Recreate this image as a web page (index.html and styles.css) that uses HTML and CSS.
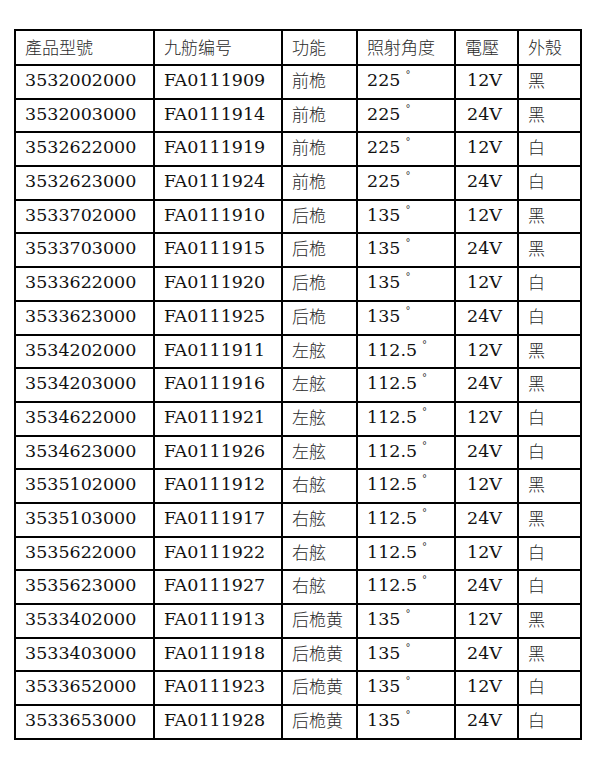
FILE: index.html
```html
<!DOCTYPE html>
<html lang="zh-Hant">
<head>
<meta charset="utf-8">
<title>產品型號</title>
<link rel="stylesheet" href="styles.css">
</head>
<body>
<table class="spec">
<colgroup>
<col class="c1"><col class="c2"><col class="c3"><col class="c4"><col class="c5"><col class="c6">
</colgroup>
<thead>
<tr><th class="zh">產品型號</th><th class="zh">九舫编号</th><th class="zh">功能</th><th class="zh">照射角度</th><th class="zh">電壓</th><th class="zh">外殼</th></tr>
</thead>
<tbody>
<tr><td>3532002000</td><td>FA0111909</td><td class="zh">前桅</td><td>225<span class="deg">°</span></td><td class="v">12V</td><td class="zh">黑</td></tr>
<tr><td>3532003000</td><td>FA0111914</td><td class="zh">前桅</td><td>225<span class="deg">°</span></td><td class="v">24V</td><td class="zh">黑</td></tr>
<tr><td>3532622000</td><td>FA0111919</td><td class="zh">前桅</td><td>225<span class="deg">°</span></td><td class="v">12V</td><td class="zh">白</td></tr>
<tr><td>3532623000</td><td>FA0111924</td><td class="zh">前桅</td><td>225<span class="deg">°</span></td><td class="v">24V</td><td class="zh">白</td></tr>
<tr><td>3533702000</td><td>FA0111910</td><td class="zh">后桅</td><td>135<span class="deg">°</span></td><td class="v">12V</td><td class="zh">黑</td></tr>
<tr><td>3533703000</td><td>FA0111915</td><td class="zh">后桅</td><td>135<span class="deg">°</span></td><td class="v">24V</td><td class="zh">黑</td></tr>
<tr><td>3533622000</td><td>FA0111920</td><td class="zh">后桅</td><td>135<span class="deg">°</span></td><td class="v">12V</td><td class="zh">白</td></tr>
<tr><td>3533623000</td><td>FA0111925</td><td class="zh">后桅</td><td>135<span class="deg">°</span></td><td class="v">24V</td><td class="zh">白</td></tr>
<tr><td>3534202000</td><td>FA0111911</td><td class="zh">左舷</td><td>112.5<span class="deg">°</span></td><td class="v">12V</td><td class="zh">黑</td></tr>
<tr><td>3534203000</td><td>FA0111916</td><td class="zh">左舷</td><td>112.5<span class="deg">°</span></td><td class="v">24V</td><td class="zh">黑</td></tr>
<tr><td>3534622000</td><td>FA0111921</td><td class="zh">左舷</td><td>112.5<span class="deg">°</span></td><td class="v">12V</td><td class="zh">白</td></tr>
<tr><td>3534623000</td><td>FA0111926</td><td class="zh">左舷</td><td>112.5<span class="deg">°</span></td><td class="v">24V</td><td class="zh">白</td></tr>
<tr><td>3535102000</td><td>FA0111912</td><td class="zh">右舷</td><td>112.5<span class="deg">°</span></td><td class="v">12V</td><td class="zh">黑</td></tr>
<tr><td>3535103000</td><td>FA0111917</td><td class="zh">右舷</td><td>112.5<span class="deg">°</span></td><td class="v">24V</td><td class="zh">黑</td></tr>
<tr><td>3535622000</td><td>FA0111922</td><td class="zh">右舷</td><td>112.5<span class="deg">°</span></td><td class="v">12V</td><td class="zh">白</td></tr>
<tr><td>3535623000</td><td>FA0111927</td><td class="zh">右舷</td><td>112.5<span class="deg">°</span></td><td class="v">24V</td><td class="zh">白</td></tr>
<tr><td>3533402000</td><td>FA0111913</td><td class="zh">后桅黄</td><td>135<span class="deg">°</span></td><td class="v">12V</td><td class="zh">黑</td></tr>
<tr><td>3533403000</td><td>FA0111918</td><td class="zh">后桅黄</td><td>135<span class="deg">°</span></td><td class="v">24V</td><td class="zh">黑</td></tr>
<tr><td>3533652000</td><td>FA0111923</td><td class="zh">后桅黄</td><td>135<span class="deg">°</span></td><td class="v">12V</td><td class="zh">白</td></tr>
<tr><td>3533653000</td><td>FA0111928</td><td class="zh">后桅黄</td><td>135<span class="deg">°</span></td><td class="v">24V</td><td class="zh">白</td></tr>
</tbody>
</table>
</body>
</html>
```
FILE: styles.css
```css
html, body {
  margin: 0;
  padding: 0;
  background: #ffffff;
}
body {
  padding: 28.5px 0 0 14px;
}
.spec {
  border-collapse: separate;
  border-spacing: 0;
  table-layout: fixed;
  width: 568px;
  border-left: 2px solid #000;
  border-top: 2px solid #000;
  font-family: "DejaVu Serif", "Noto Sans CJK TC", serif;
  font-size: 17.5px;
  color: #111;
}
.c1 { width: 139px; }
.c2 { width: 128px; }
.c3 { width: 75px; }
.c4 { width: 98px; }
.c5 { width: 63px; }
.c6 { width: 63px; }
.spec th,
.spec td {
  box-sizing: border-box;
  border-right: 2px solid #000;
  border-bottom: 2px solid #000;
  text-align: left;
  vertical-align: top;
  font-weight: normal;
  line-height: 20px;
  padding: 4px 4px 0 9px;
  white-space: nowrap;
  overflow: hidden;
}
.spec th {
  height: 35.5px;
  padding-top: 6px;
}
.spec td {
  height: 33.7px;
}
.spec .zh {
  font-family: "Noto Sans CJK TC", "Noto Sans CJK SC", sans-serif;
  font-weight: 300;
  font-size: 17px;
  color: #2a2a2a;
  padding-left: 9px;
}
.spec td.v {
  padding-left: 11px;
}
.deg {
  display: inline-block;
  font-family: "DejaVu Sans", sans-serif;
  font-size: 10px;
  line-height: 10px;
  vertical-align: top;
  margin-left: 5px;
  margin-top: 0px;
  color: #333;
}
```
